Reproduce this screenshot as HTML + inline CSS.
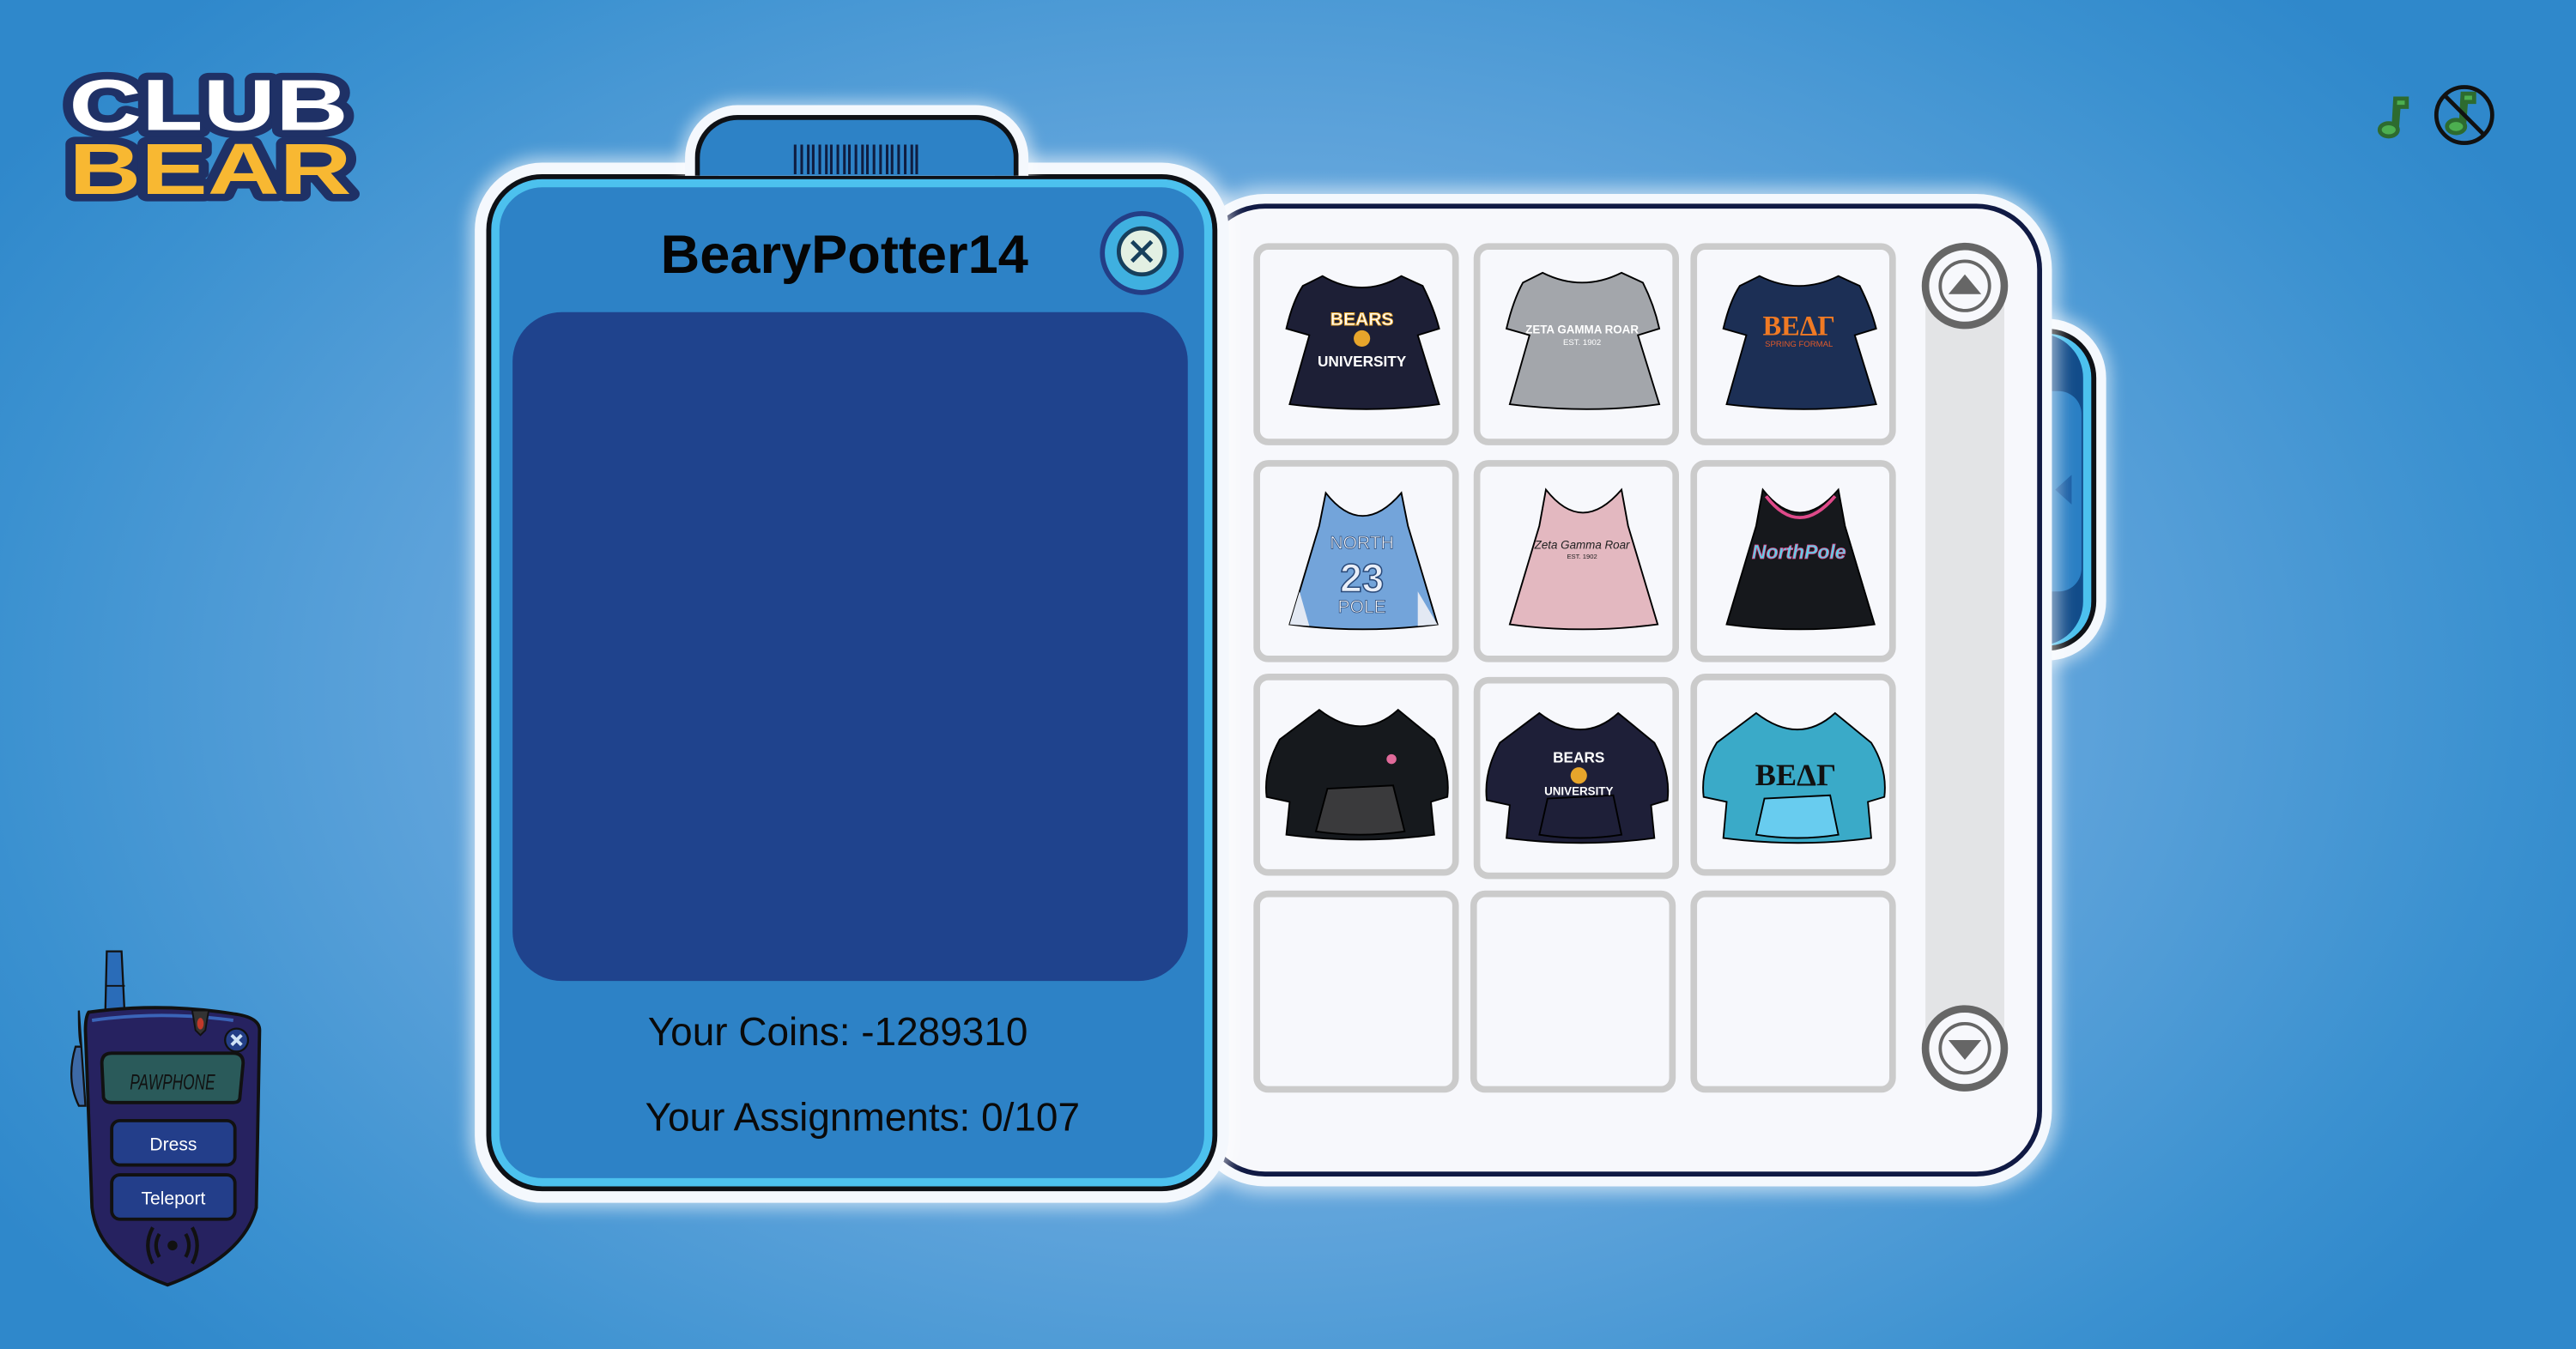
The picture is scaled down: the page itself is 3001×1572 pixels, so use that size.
<!DOCTYPE html>
<html><head><meta charset="utf-8">
<style>
html,body{margin:0;padding:0;width:3001px;height:1572px;overflow:hidden;}
body{background:#3a8fd0;}
#s{position:absolute;left:0;top:0;width:1568px;height:821px;transform:scale(1.91390,1.91474);transform-origin:0 0;
background:radial-gradient(ellipse 900px 600px at 760px 420px,#8fc0e6 0%,#6aa9de 45%,#3b91d0 85%,#2f88cb 100%);
font-family:"Liberation Sans",sans-serif;overflow:hidden;}
.abs{position:absolute;}
.lp{left:296px;top:106px;width:445px;height:619px;box-sizing:border-box;border:3px solid #0e1116;border-radius:34px;background:#2d82c6;
box-shadow:0 0 0 7px #f4f8fd,0 0 10px 10px rgba(255,255,255,.6), inset 0 0 0 5px #4cc1ee;}
.tab{left:423px;top:70px;width:197px;height:37px;box-sizing:border-box;border:3px solid #0e1116;border-bottom:none;border-radius:26px 26px 0 0;background:#2d82c6;
box-shadow:0 0 0 6px #f4f8fd,0 0 9px 9px rgba(255,255,255,.5);clip-path:inset(-20px -20px 0 -20px);}
.rp{left:730px;top:124px;width:513px;height:592px;box-sizing:border-box;border:3px solid #101a44;border-radius:40px;background:#f7f8fc;
box-shadow:0 0 0 6px #f4f8fd,0 0 10px 10px rgba(255,255,255,.55);}
.side{left:1200px;top:200px;width:76px;height:196px;box-sizing:border-box;border:3px solid #0e1116;border-radius:0 30px 30px 0;background:#124c8a;
box-shadow:0 0 0 6px #f4f8fd,0 0 9px 9px rgba(255,255,255,.5), inset -5px 0 0 #4cc1ee;}
.cell{position:absolute;width:125px;height:123px;box-sizing:border-box;border:4px solid #cbcbcb;border-radius:9px;background:#f7f8fc;}
.cell svg{position:absolute;left:-4px;top:-4px;}
.narrow{font-family:"Liberation Sans Narrow","Liberation Sans",sans-serif;}
</style></head><body>
<div id="s">

<svg class="abs" style="left:34px;top:38px" width="190" height="90" viewBox="0 0 190 90">
<g font-family="Liberation Sans" font-weight="bold" text-anchor="middle" stroke-linejoin="round" paint-order="stroke">
<text x="93" y="41" font-size="44" fill="#ffffff" stroke="#1f3166" stroke-width="9" textLength="170" lengthAdjust="spacingAndGlyphs">CLUB</text>
<text x="94" y="80" font-size="44" fill="#f8b832" stroke="#1f3166" stroke-width="9" textLength="172" lengthAdjust="spacingAndGlyphs">BEAR</text>
</g></svg>

<svg class="abs" style="left:1440px;top:48px" width="90" height="45" viewBox="0 0 90 45">
<g stroke="#2d6b2f" stroke-width="2.5" fill="#4caf50">
<path d="M17 30 L18 12 L25 12 L25 17 L20 17 L19 30" fill="#4caf50"/>
<ellipse cx="14" cy="31" rx="5.5" ry="4"/>
<path d="M58 27 L59 9 L66 9 L66 14 L61 14 L60 27"/>
<ellipse cx="55" cy="29" rx="5.5" ry="4"/>
</g>
<circle cx="60" cy="22" r="17" fill="none" stroke="#111" stroke-width="2.5"/>
<line x1="48" y1="10" x2="72" y2="34" stroke="#111" stroke-width="2.5"/>
</svg>

<div class="abs side"><div class="abs" style="left:40px;top:35px;width:24px;height:122px;background:#2a7fc4;border-radius:0 14px 14px 0"></div>
<svg class="abs" style="left:48px;top:86px" width="12" height="20"><path d="M10 0 L0 9 L10 18Z" fill="#185ea5"/></svg></div>

<div class="abs rp"></div>
<div class="abs" style="left:1172px;top:175px;width:48px;height:470px;background:#e3e4e6"></div>
<svg class="abs" style="left:1168px;top:146px" width="56" height="56"><circle cx="28" cy="28" r="24" fill="#f7f8fc" stroke="#666" stroke-width="4.5"/><circle cx="28" cy="28" r="15" fill="none" stroke="#666" stroke-width="2"/><path d="M18 33 L28 21 L38 33Z" fill="#666"/></svg>
<svg class="abs" style="left:1168px;top:610px" width="56" height="56"><circle cx="28" cy="28" r="24" fill="#f7f8fc" stroke="#666" stroke-width="4.5"/><circle cx="28" cy="28" r="15" fill="none" stroke="#666" stroke-width="2"/><path d="M18 23 L28 35 L38 23Z" fill="#666"/></svg>

<div class="cell" style="left:763px;top:148px"><svg width="125" height="123" viewBox="0 0 125 123">
<path d="M42 20 Q66 34 90 20 L103 26 Q110 40 113 52 L100 56 L113 98 Q70 104 22 98 L34 56 L20 52 Q24 35 30 26 Z" fill="#1d1f36" stroke="#000" stroke-width="1"/>
<text x="66" y="50" font-size="11" font-weight="bold" fill="#fff" stroke="#e7a52b" stroke-width=".5" text-anchor="middle">BEARS</text>
<circle cx="66" cy="58" r="5" fill="#e7a52b"/>
<text x="66" y="75" font-size="9" font-weight="bold" fill="#fff" text-anchor="middle">UNIVERSITY</text></svg></div>
<div class="cell" style="left:897px;top:148px"><svg width="125" height="123" viewBox="0 0 125 123">
<path d="M42 18 Q66 30 90 18 L103 24 Q110 38 113 52 L100 56 L113 98 Q70 104 22 98 L34 56 L20 52 Q24 35 30 24 Z" fill="#a3a6ab" stroke="#000" stroke-width="1"/>
<text x="66" y="55" font-size="7" font-weight="bold" fill="#fff" text-anchor="middle">ZETA GAMMA ROAR</text>
<text x="66" y="62" font-size="5" fill="#fff" text-anchor="middle">EST. 1902</text></svg></div>
<div class="cell" style="left:1029px;top:148px"><svg width="125" height="123" viewBox="0 0 125 123">
<path d="M42 20 Q66 32 90 20 L103 26 Q110 40 113 52 L100 56 L113 98 Q70 104 22 98 L34 56 L20 52 Q24 35 30 26 Z" fill="#1c2f55" stroke="#000" stroke-width="1"/>
<text x="66" y="56" font-size="17" font-weight="bold" font-family="Liberation Serif" fill="#f07a24" text-anchor="middle">BEΔΓ</text>
<text x="66" y="63" font-size="5" fill="#e05a2a" text-anchor="middle">SPRING FORMAL</text></svg></div>

<div class="cell" style="left:763px;top:280px"><svg width="125" height="123" viewBox="0 0 125 123">
<path d="M44 20 Q66 48 90 20 L94 40 L112 100 Q66 106 22 100 L40 40 Z" fill="#73a4da" stroke="#000" stroke-width="1"/>
<path d="M28 80 L22 100 L34 101Z M100 80 L112 100 L100 101Z" fill="#e3e9f3"/>
<text x="66" y="54" font-size="11" fill="#fff" stroke="#2a4a7a" stroke-width=".4" text-anchor="middle">NORTH</text>
<text x="66" y="80" font-size="24" font-weight="bold" fill="#e9eef8" stroke="#2a4a7a" stroke-width=".8" text-anchor="middle">23</text>
<text x="66" y="93" font-size="11" fill="#fff" stroke="#2a4a7a" stroke-width=".4" text-anchor="middle">POLE</text></svg></div>
<div class="cell" style="left:897px;top:280px"><svg width="125" height="123" viewBox="0 0 125 123">
<path d="M44 18 Q66 46 90 18 L94 40 L112 100 Q66 106 22 100 L40 40 Z" fill="#e3b8c0" stroke="#000" stroke-width="1"/>
<text x="66" y="54" font-size="7" font-style="italic" fill="#222" text-anchor="middle">Zeta Gamma Roar</text>
<text x="66" y="60" font-size="4" fill="#222" text-anchor="middle">EST. 1902</text></svg></div>
<div class="cell" style="left:1029px;top:280px"><svg width="125" height="123" viewBox="0 0 125 123">
<path d="M44 18 Q66 46 90 18 L94 40 L112 100 Q66 106 22 100 L40 40 Z" fill="#16181c" stroke="#000" stroke-width="1"/>
<path d="M46 22 Q66 48 88 22" fill="none" stroke="#e04a8a" stroke-width="2"/>
<text x="66" y="60" font-size="12" font-style="italic" font-weight="bold" fill="#5fd0e8" stroke="#e04a8a" stroke-width=".4" text-anchor="middle">NorthPole</text></svg></div>

<div class="cell" style="left:763px;top:410px"><svg width="125" height="123" viewBox="0 0 125 123">
<path d="M40 22 Q66 42 88 22 L110 40 Q120 58 118 75 L108 78 L110 98 Q66 104 20 98 L22 78 L8 75 Q6 58 16 40 Z" fill="#16191d" stroke="#000" stroke-width="1"/>
<path d="M45 70 L85 68 L92 96 Q65 100 38 96 Z" fill="#3a3a3c" stroke="#000" stroke-width="1"/>
<circle cx="84" cy="52" r="3" fill="#e06a9a"/></svg></div>
<div class="cell" style="left:897px;top:412px"><svg width="125" height="123" viewBox="0 0 125 123">
<path d="M40 22 Q66 42 88 22 L110 40 Q120 58 118 75 L108 78 L110 98 Q66 104 20 98 L22 78 L8 75 Q6 58 16 40 Z" fill="#1e1f38" stroke="#000" stroke-width="1"/>
<path d="M45 74 L85 72 L90 96 Q65 100 40 96 Z" fill="#1e1f38" stroke="#000" stroke-width="1"/>
<text x="64" y="52" font-size="9" font-weight="bold" fill="#fff" text-anchor="middle">BEARS</text>
<circle cx="64" cy="60" r="5" fill="#e7a52b"/>
<text x="64" y="72" font-size="7" font-weight="bold" fill="#fff" text-anchor="middle">UNIVERSITY</text></svg></div>
<div class="cell" style="left:1029px;top:410px"><svg width="125" height="123" viewBox="0 0 125 123">
<path d="M40 24 Q66 44 88 24 L110 42 Q120 58 118 75 L108 78 L110 100 Q66 106 20 100 L22 78 L8 75 Q6 58 16 42 Z" fill="#3aaac8" stroke="#000" stroke-width="1"/>
<path d="M45 76 L85 74 L90 98 Q65 102 40 98 Z" fill="#68ccef" stroke="#000" stroke-width="1"/>
<text x="64" y="68" font-size="19" font-weight="bold" font-family="Liberation Serif" fill="#111" text-anchor="middle">BEΔΓ</text></svg></div>

<div class="cell" style="left:763px;top:542px"></div>
<div class="cell" style="left:895px;top:542px"></div>
<div class="cell" style="left:1029px;top:542px"></div>

<div class="abs lp"></div>
<div class="abs tab"></div>
<svg class="abs" style="left:483px;top:88px" width="76" height="18"><g stroke="#0f1d40" stroke-width="1.6">
<line x1="1" y1="0" x2="1" y2="18"/><line x1="5" y1="0" x2="5" y2="18"/><line x1="9" y1="0" x2="9" y2="18"/><line x1="12" y1="0" x2="12" y2="18"/><line x1="16" y1="0" x2="16" y2="18"/><line x1="20" y1="0" x2="20" y2="18"/><line x1="23" y1="0" x2="23" y2="18"/><line x1="27" y1="0" x2="27" y2="18"/><line x1="31" y1="0" x2="31" y2="18"/><line x1="34" y1="0" x2="34" y2="18"/><line x1="38" y1="0" x2="38" y2="18"/><line x1="42" y1="0" x2="42" y2="18"/><line x1="45" y1="0" x2="45" y2="18"/><line x1="49" y1="0" x2="49" y2="18"/><line x1="53" y1="0" x2="53" y2="18"/><line x1="57" y1="0" x2="57" y2="18"/><line x1="60" y1="0" x2="60" y2="18"/><line x1="64" y1="0" x2="64" y2="18"/><line x1="68" y1="0" x2="68" y2="18"/><line x1="72" y1="0" x2="72" y2="18"/><line x1="75" y1="0" x2="75" y2="18"/></g></svg>
<div class="abs" style="left:314px;top:136px;width:400px;text-align:center;font-size:33px;font-weight:bold;color:#050505;white-space:nowrap">BearyPotter14</div>
<svg class="abs" style="left:668px;top:127px" width="54" height="54"><circle cx="27" cy="27" r="24" fill="#3fb0e0" stroke="#233e86" stroke-width="3"/><circle cx="27" cy="26" r="14" fill="#e3f0e3" stroke="#173f5c" stroke-width="2.5"/><path d="M21 20 L33 32 M33 20 L21 32" stroke="#173f5c" stroke-width="2.5"/></svg>
<div class="abs" style="left:312px;top:190px;width:411px;height:407px;background:#1f438d;border-radius:30px"></div>
<div class="abs narrow" style="left:300px;top:615px;width:420px;text-align:center;font-size:24px;color:#0a0a0a">Your Coins: -1289310</div>
<div class="abs narrow" style="left:315px;top:667px;width:420px;text-align:center;font-size:24px;color:#0a0a0a">Your Assignments: 0/107</div>

<svg class="abs" style="left:38px;top:575px" width="124" height="212" viewBox="0 0 124 212">
<path d="M27 4 L36 4 L38 45 L26 45 Z" fill="#2a6cb8" stroke="#111" stroke-width="1.2"/>
<path d="M26 25 L38 25" stroke="#111" stroke-width="1"/>
<path d="M10 40 Q10 62 12 62 L8 62 Q2 82 10 98 L14 98 Z" fill="#3d6aa6" stroke="#111" stroke-width="1.2"/>
<path d="M16 41 Q60 35 104 42 Q120 44 120 52 L118 160 Q110 190 64 207 Q22 192 18 160 L14 52 Q14 44 16 41Z" fill="#262260" stroke="#111" stroke-width="2"/>
<path d="M18 46 Q60 40 104 46" fill="none" stroke="#3a64b8" stroke-width="2"/>
<path d="M79 40 L89 40 L87 52 L84 55 L81 52 Z" fill="#333" stroke="#111"/>
<ellipse cx="84" cy="48" rx="2" ry="3.5" fill="#c0392b"/>
<circle cx="106" cy="58" r="7" fill="#233e86" stroke="#111" stroke-width="1.2"/>
<path d="M103 55 L109 61 M109 55 L103 61" stroke="#cfe2f5" stroke-width="2"/>
<path d="M24 72 Q24 66 30 66 L104 66 Q110 66 110 72 L108 93 Q108 96 104 96 L30 96 Q26 96 25 93 Z" fill="#2a5a5a" stroke="#111" stroke-width="2"/>
<text x="67" y="88" font-size="13" font-style="italic" fill="#111" text-anchor="middle" textLength="52" lengthAdjust="spacingAndGlyphs">PAWPHONE</text>
<rect x="30" y="107" width="75" height="27" rx="5" fill="#233e8a" stroke="#111" stroke-width="2"/>
<text x="67.5" y="125" font-size="11" fill="#fff" text-anchor="middle">Dress</text>
<rect x="30" y="140" width="75" height="27" rx="5" fill="#233e8a" stroke="#111" stroke-width="2"/>
<text x="67.5" y="158" font-size="11" fill="#fff" text-anchor="middle">Teleport</text>
<circle cx="67" cy="183" r="3" fill="#111"/>
<path d="M59 176 Q55 183 59 190 M75 176 Q79 183 75 190 M55 172 Q49 183 55 194 M79 172 Q85 183 79 194" fill="none" stroke="#111" stroke-width="2.2"/>
</svg>

</div>
</body></html>
